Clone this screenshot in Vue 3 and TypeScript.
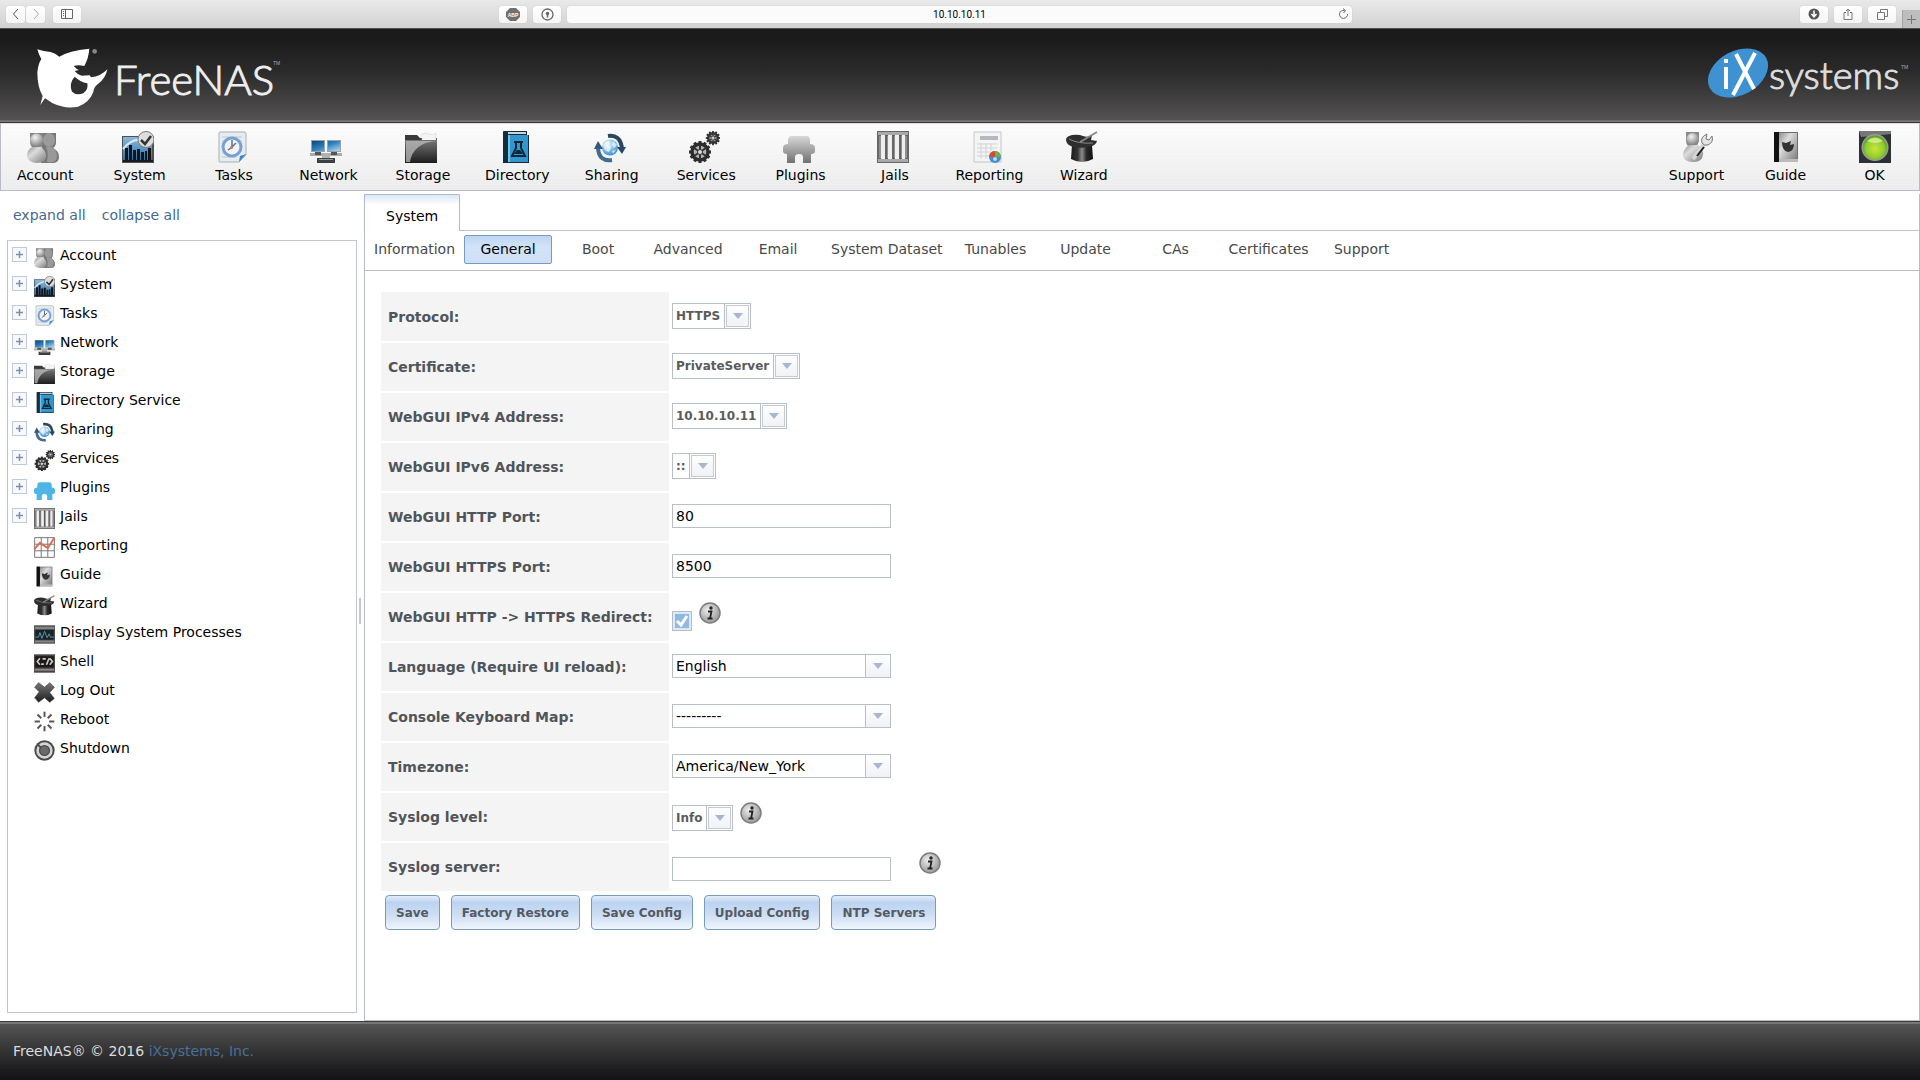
<script setup lang="ts">
import { ref } from 'vue'

interface NavItem {
  label: string
  icon: string
}
interface TreeItem extends NavItem {
  children: boolean
}
interface Field {
  id: string
  label: string
  kind: 'compact' | 'select' | 'text' | 'check'
  value?: string
  hint?: boolean
}

const mainNav: NavItem[] = [
  { label: 'Account', icon: 'account' },
  { label: 'System', icon: 'system' },
  { label: 'Tasks', icon: 'tasks' },
  { label: 'Network', icon: 'network' },
  { label: 'Storage', icon: 'storage' },
  { label: 'Directory', icon: 'directory' },
  { label: 'Sharing', icon: 'sharing' },
  { label: 'Services', icon: 'services' },
  { label: 'Plugins', icon: 'plugins' },
  { label: 'Jails', icon: 'jails' },
  { label: 'Reporting', icon: 'report' },
  { label: 'Wizard', icon: 'wizard' },
]

const sideNav: NavItem[] = [
  { label: 'Support', icon: 'support' },
  { label: 'Guide', icon: 'guide' },
  { label: 'OK', icon: 'alert' },
]

const tree: TreeItem[] = [
  { label: 'Account', icon: 'account', children: true },
  { label: 'System', icon: 'system', children: true },
  { label: 'Tasks', icon: 'tasks', children: true },
  { label: 'Network', icon: 'network', children: true },
  { label: 'Storage', icon: 'storage', children: true },
  { label: 'Directory Service', icon: 'directory', children: true },
  { label: 'Sharing', icon: 'sharing', children: true },
  { label: 'Services', icon: 'services', children: true },
  { label: 'Plugins', icon: 'plugins-blue', children: true },
  { label: 'Jails', icon: 'jails', children: true },
  { label: 'Reporting', icon: 'chart', children: false },
  { label: 'Guide', icon: 'guide', children: false },
  { label: 'Wizard', icon: 'wizard', children: false },
  { label: 'Display System Processes', icon: 'processes', children: false },
  { label: 'Shell', icon: 'shell', children: false },
  { label: 'Log Out', icon: 'logout', children: false },
  { label: 'Reboot', icon: 'reboot', children: false },
  { label: 'Shutdown', icon: 'shutdown', children: false },
]

const tabs = [
  'Information', 'General', 'Boot', 'Advanced', 'Email', 'System Dataset',
  'Tunables', 'Update', 'CAs', 'Certificates', 'Support',
]
const activeTab = ref('General')

const fields = ref<Field[]>([
  { id: 'protocol', label: 'Protocol:', kind: 'compact', value: 'HTTPS' },
  { id: 'certificate', label: 'Certificate:', kind: 'compact', value: 'PrivateServer' },
  { id: 'ipv4', label: 'WebGUI IPv4 Address:', kind: 'compact', value: '10.10.10.11' },
  { id: 'ipv6', label: 'WebGUI IPv6 Address:', kind: 'compact', value: '::' },
  { id: 'http-port', label: 'WebGUI HTTP Port:', kind: 'text', value: '80' },
  { id: 'https-port', label: 'WebGUI HTTPS Port:', kind: 'text', value: '8500' },
  { id: 'redirect', label: 'WebGUI HTTP -> HTTPS Redirect:', kind: 'check', hint: true },
  { id: 'language', label: 'Language (Require UI reload):', kind: 'select', value: 'English' },
  { id: 'keymap', label: 'Console Keyboard Map:', kind: 'select', value: '---------' },
  { id: 'timezone', label: 'Timezone:', kind: 'select', value: 'America/New_York' },
  { id: 'syslog-level', label: 'Syslog level:', kind: 'compact', value: 'Info', hint: true },
  { id: 'syslog-server', label: 'Syslog server:', kind: 'text', value: '', hint: true },
])

const actions = ['Save', 'Factory Restore', 'Save Config', 'Upload Config', 'NTP Servers']
const gearTeeth = [0, 30, 60, 90, 120, 150, 180, 210, 240, 270, 300, 330]
const spokes = [0, 45, 90, 135, 180, 225, 270, 315]
</script>

<template>
  <svg class="sprite" aria-hidden="true">
    <defs>
      <linearGradient id="g-silver" x1="0" y1="0" x2="1" y2="1">
        <stop offset="0" stop-color="#8e8e8e" /><stop offset=".35" stop-color="#dcdcdc" /><stop offset="1" stop-color="#7a7a7a" />
      </linearGradient>
      <linearGradient id="g-dark" x1="0" y1="0" x2="0" y2="1">
        <stop offset="0" stop-color="#777" /><stop offset="1" stop-color="#1c1c1c" />
      </linearGradient>
      <linearGradient id="g-metal" x1="0" y1="0" x2="1" y2="0">
        <stop offset="0" stop-color="#1c1c1c" /><stop offset=".3" stop-color="#333" /><stop offset=".5" stop-color="#8c8c8c" /><stop offset=".7" stop-color="#2a2a2a" /><stop offset="1" stop-color="#111" />
      </linearGradient>
      <linearGradient id="g-blue" x1="0" y1="0" x2="0" y2="1">
        <stop offset="0" stop-color="#8ab8dc" /><stop offset="1" stop-color="#2c74ad" />
      </linearGradient>
      <linearGradient id="g-screen" x1="0" y1="0" x2="1" y2="1">
        <stop offset="0" stop-color="#0d4679" /><stop offset=".5" stop-color="#2f83c0" /><stop offset="1" stop-color="#b4dbf2" />
      </linearGradient>
      <linearGradient id="g-plug" x1="0" y1="0" x2="0" y2="1">
        <stop offset="0" stop-color="#d8d8d8" /><stop offset="1" stop-color="#707070" />
      </linearGradient>
      <radialGradient id="g-head" cx=".4" cy=".3" r=".7">
        <stop offset="0" stop-color="#f4f4f4" /><stop offset="1" stop-color="#858585" />
      </radialGradient>
      <radialGradient id="g-green" cx=".5" cy=".55" r=".55">
        <stop offset="0" stop-color="#c8e63c" /><stop offset=".7" stop-color="#8fcc2e" /><stop offset="1" stop-color="#4f9a22" />
      </radialGradient>
      <radialGradient id="g-globe" cx=".4" cy=".3" r=".7">
        <stop offset="0" stop-color="#e6f5ff" /><stop offset="1" stop-color="#3c8fd0" />
      </radialGradient>
      <radialGradient id="g-info" cx=".4" cy=".35" r=".65">
        <stop offset="0" stop-color="#ededed" /><stop offset="1" stop-color="#9a9a9a" />
      </radialGradient>
    </defs>

    <symbol id="i-account" viewBox="0 0 32 32">
      <path d="M15 2h14v9q0 4-3 6 6 3 6 9 0 5-5 6H14z" fill="#777" />
      <ellipse cx="22" cy="9" rx="6" ry="7" fill="#9a9a9a" />
      <path d="M3 2h13v9q0 3-2 5h-9q-2-2-2-5z" fill="#858585" />
      <circle cx="9.500" cy="9" r="6.500" fill="url(#g-head)" />
      <path d="M5 16h9q5 4 5 9 0 7-9 7T0 25q0-6 5-9z" fill="url(#g-silver)" />
      <path d="M19 16q3 6 1 15 10 2 10-6 0-6-5-9z" fill="#999" />
    </symbol>
    <symbol id="i-system" viewBox="0 0 32 32">
      <path d="M0 5h32v27H0z" fill="#4c5155" />
      <path d="M1 6h29v23H1z" fill="url(#g-blue)" />
      <path d="M1 18Q14 2 29 14" fill="none" stroke="#d5e8f5" stroke-width="2" />
      <path d="M3 31V17h3v14M7 31V14h3v17M11 31V19h3v12M15 31V18h3v13M19 31V21h3v10M23 31V20h2v11M26 31V17h3v14z" fill="#101318" />
      <path d="M1 29h30v2H1z" fill="#181b1e" />
      <circle cx="24" cy="8.500" r="8" fill="#dedede" stroke="#777" />
      <path d="M19 9l4 4 6-8" fill="none" stroke="#333" stroke-width="2.500" />
    </symbol>
    <symbol id="i-tasks" viewBox="0 0 32 32">
      <path d="M3 2q0-1 1-1h24q2 0 2 2v21l-7 7H4q-1 0-1-1z" fill="#e6ecef" stroke="#a4b0b5" />
      <path d="M6 6h20M6 10h20M6 14h20M6 18h20M6 22h18M6 26h14" stroke="#b7c8c8" />
      <circle cx="16" cy="16" r="9" fill="#eef4fb" stroke="#7c9fd0" stroke-width="3" />
      <path d="M16 9v7l-4 3M16 16l4-4" fill="none" stroke="#5b7390" stroke-width="1.500" />
      <circle cx="15.500" cy="16.500" r="1.500" fill="#c77a55" />
      <path d="M23 31l1-6 6-2z" fill="#3587c8" />
    </symbol>
    <symbol id="i-network" viewBox="0 0 32 32">
      <path d="M0 22h32v3H0z" fill="#aaa" />
      <path d="M12 22h8v6h-8z" fill="#aeb3b6" />
      <path d="M1 9h14v12H1zM17 9h14v12H17z" fill="#9aa3a8" />
      <path d="M2 10h12v10H2zM18 10h12v10H18z" fill="url(#g-screen)" />
      <path d="M5 21h6v3H5zM21 21h6v3h-6z" fill="#555" />
      <path d="M7 27h18v5H7z" fill="#3c3f41" /><path d="M9 28h14v1H9z" fill="#999" />
    </symbol>
    <symbol id="i-storage" viewBox="0 0 32 32">
      <path d="M0 4h12l3 3h17v5H0z" fill="#3a3a3a" />
      <path d="M17 3q4-2 7 0t7-1v10H17z" fill="#f4f4f4" stroke="#ccc" stroke-width=".5" />
      <path d="M0 9h32v23H0z" fill="url(#g-dark)" />
      <path d="M1 10h30Q8 12 5 31H1z" fill="#bcbcbc" opacity=".75" />
    </symbol>
    <symbol id="i-directory" viewBox="0 0 32 32">
      <path d="M4 1q0-1 1-1h23v4h2v28H4z" fill="#172b3c" />
      <path d="M9 1h18v2H9z" fill="#c9d3d8" />
      <path d="M9 4h20v27H9z" fill="#3297cf" /><path d="M9 4h2v27H9z" fill="#6cc5ee" />
      <path d="M15 11h9M17 11v6l-4 8h13l-4-8v-6" fill="none" stroke="#0f2637" stroke-width="2" />
      <path d="M15 23h9l-3-4h-3z" fill="#0f2637" />
    </symbol>
    <symbol id="i-sharing" viewBox="0 0 32 32">
      <circle cx="16" cy="16.500" r="8" fill="url(#g-globe)" />
      <path d="M9 14q3-5 7-4l-2 4 3 2-2 5q-5-1-6-7M19 10l4 4-3 3-2-3zM18 20l4-1-3 4z" fill="#fff" opacity=".65" />
      <path d="M14 5q12-2 14 12" fill="none" stroke="#29485f" stroke-width="4" />
      <path d="M23 16h9l-4 7z" fill="#29485f" />
      <path d="M18 29Q5 31 4 17" fill="none" stroke="#3f6d90" stroke-width="4" />
      <path d="M0 18h9L4 10z" fill="#35597a" />
    </symbol>
    <symbol id="i-services" viewBox="0 0 32 32">
      <g transform="translate(12 21)">
        <rect v-for="a in gearTeeth" :key="a" x="-1.500" y="-11" width="3" height="4" fill="#2d2d2d" :transform="`rotate(${a})`" />
        <circle r="8" fill="#b4b4b4" stroke="#2d2d2d" stroke-width="3.500" />
        <path d="M0-7V7M-6-4L6 4M-6 4L6-4" stroke="#333" stroke-width="2" /><circle r="2.500" fill="#ddd" stroke="#333" />
      </g>
      <g transform="translate(25 7) scale(.6)">
        <rect v-for="a in gearTeeth" :key="a" x="-1.500" y="-12" width="3" height="5" fill="#2d2d2d" :transform="`rotate(${a})`" />
        <circle r="8" fill="#999" stroke="#333" stroke-width="4" />
        <path d="M0-7V7M-6-4L6 4M-6 4L6-4" stroke="#333" stroke-width="2" /><circle r="2.500" fill="#ccc" />
      </g>
    </symbol>
    <symbol id="i-plugins" viewBox="0 0 32 32">
      <path d="M5 13V9q0-4 4-4h14q4 0 4 4v4q5 0 5 4v3q0 3-4 3v9h-8v-6q0-3-4-3t-4 3v6H4v-9q-4 0-4-3v-3q0-4 5-4z" fill="url(#g-plug)" />
    </symbol>
    <symbol id="i-plugins-blue" viewBox="0 0 32 32">
      <path d="M5 13V9q0-4 4-4h14q4 0 4 4v4q5 0 5 4v3q0 3-4 3v9h-8v-6q0-3-4-3t-4 3v6H4v-9q-4 0-4-3v-3q0-4 5-4z" fill="#4fb5e6" />
    </symbol>
    <symbol id="i-jails" viewBox="0 0 32 32">
      <path d="M0 0h32v32H0z" fill="#666" />
      <path d="M1 1h30v3H1zM1 28h30v3H1z" fill="#a9a9a9" />
      <path d="M2 5h28v22H2z" fill="#909090" />
      <path d="M4 4h4v24H4zM11 4h4v24h-4zM18 4h4v24h-4zM25 4h3v24h-3z" fill="#eee" />
      <path d="M9 4v24M16 4v24M23 4v24" stroke="#555" stroke-width="1.500" />
    </symbol>
    <symbol id="i-report" viewBox="0 0 32 32">
      <path d="M3 1h27v30H3z" fill="#f4f4f4" stroke="#c6c6c6" />
      <path d="M9 5h18v4H9z" fill="#b5b8bc" />
      <path d="M6 13h20M6 17h20M6 21h14M6 25h12M10 12v16M15 12v16M20 12v8" stroke="#d3d3d3" />
      <circle cx="24" cy="26" r="6" fill="#3b8fe0" />
      <path d="M24 26v-6a6 6 0 0 0-6 6z" fill="#d84a32" /><path d="M24 26v-6a6 6 0 0 1 6 6z" fill="#6eb33c" />
      <circle cx="24" cy="28" r="2" fill="#bcdcf8" />
    </symbol>
    <symbol id="i-wizard" viewBox="0 0 32 32">
      <path d="M6 14h20l1 14q-11 6-22 0z" fill="url(#g-metal)" />
      <path d="M0 8q1-3 6-4 7-1 11 1 5 2 9-1l-1 5 6 1q-1 5-9 6-13 2-19-2Q0 12 0 8z" fill="#2e2e2e" />
      <path d="M3 8q9 5 24 4" fill="none" stroke="#8a8a8a" /><path d="M14 11L31 1" stroke="#8a8a8a" stroke-width="2" />
    </symbol>
    <symbol id="i-support" viewBox="0 0 32 32">
      <path d="M5 1h13v9l-2 5H7q-2-2-2-5z" fill="#8a8a8a" />
      <circle cx="11.500" cy="8" r="6" fill="url(#g-head)" />
      <path d="M8 14h9q6 5 5 10-1 7-9 7-10 0-11-6 0-7 6-11z" fill="url(#g-silver)" />
      <path d="M12 28L24 12" stroke="#d5d5d5" stroke-width="4" /><path d="M16 25l7-9" stroke="#222" stroke-width="2" />
      <path d="M21 12q-2-6 5-9l-1 5 3 1 3-4q2 6-4 9-4 1-6-2z" fill="#e4e4e4" stroke="#777" />
    </symbol>
    <symbol id="i-guide" viewBox="0 0 32 32">
      <path d="M4 1h24v30H4z" fill="#6f6f6f" /><path d="M9 2h18v28H9z" fill="url(#g-silver)" />
      <path d="M4 1h5v30H4z" fill="#111" /><path d="M9 28h19v3H9z" fill="#bbb" />
      <path d="M12 11l4 1 5-2-1 4 4-1q0 7-6 8-6-1-6-10z" fill="#333" />
    </symbol>
    <symbol id="i-alert" viewBox="0 0 32 32">
      <path d="M0 0h32v32H0z" fill="#2e3134" /><path d="M0 0h32v3L2 6z" fill="#777" />
      <circle cx="16" cy="16.500" r="13.500" fill="#9c9c9c" />
      <circle cx="16" cy="16.500" r="12" fill="url(#g-green)" />
      <path d="M8 10q8-7 16 0-8 4-16 0z" fill="#e7f4a8" opacity=".7" />
    </symbol>
    <symbol id="i-chart" viewBox="0 0 32 32">
      <path d="M1 1h30v30H1zM1 11h30M1 21h30M11 1v30M21 1v30" fill="#fff" stroke="#777" stroke-width="1.500" />
      <path d="M0 19L9 9l12 8L31 1" fill="none" stroke="#dc6b58" stroke-width="3" />
    </symbol>
    <symbol id="i-processes" viewBox="0 0 32 32">
      <path d="M0 2h32v28H0z" fill="#4d4d4d" /><path d="M1 4h30v4H1zM1 25h30v3H1z" fill="#858585" />
      <path d="M2 9h28v15H2z" fill="#17232a" />
      <path d="M2 20h5l2-7 3 9 4-11 4 10 3-6 2 5h5" fill="none" stroke="#5c92a3" stroke-width="1.500" />
    </symbol>
    <symbol id="i-shell" viewBox="0 0 32 32">
      <path d="M0 2h32v28H0z" fill="#4a4444" /><path d="M1 24h30v3H1z" fill="#8c8585" />
      <path d="M2 5h28v17H2z" fill="#1c1818" />
      <path d="M9 8l-4 5 4 5M13 9h5M11 17h4M19 18l4-10M24 8l4 5-4 5" fill="none" stroke="#ccc" stroke-width="2.500" />
    </symbol>
    <symbol id="i-logout" viewBox="0 0 32 32">
      <path d="M7 1l9 7 8-7 7 7-7 8 7 9-7 6-8-7-9 7-6-7 7-9-7-7z" fill="url(#g-dark)" stroke="#444" stroke-linejoin="round" />
    </symbol>
    <symbol id="i-reboot" viewBox="0 0 32 32">
      <path v-for="a in spokes" :key="a" d="M16 1v8" stroke="#555" stroke-width="3" :transform="`rotate(${a} 16 16)`" />
    </symbol>
    <symbol id="i-shutdown" viewBox="0 0 32 32">
      <circle cx="16" cy="16" r="15.500" fill="#4b4b4b" />
      <circle cx="16" cy="16" r="10.500" fill="none" stroke="#d5d5d5" stroke-width="4" />
      <path d="M6 7l7 7" stroke="#4b4b4b" stroke-width="3" /><circle cx="16" cy="16" r="6.500" fill="#6a6a6a" />
    </symbol>
    <symbol id="i-info" viewBox="0 0 22 22">
      <circle cx="11" cy="11" r="10" fill="url(#g-info)" stroke="#7d7d7d" stroke-width="1.500" />
      <circle cx="12" cy="6" r="1.700" fill="#222" />
      <path d="M9 9.500h3.500l-1.500 7h2.500M8.500 16.500h3" fill="none" stroke="#222" stroke-width="1.800" />
    </symbol>
  </svg>

  <div class="page">
    <div class="browser">
      <div class="browser-left">
        <div class="pair">
          <button class="chip narrow" aria-label="Back"><svg width="8" height="12" viewBox="0 0 8 12"><path d="M6 1L1.500 6 6 11" fill="none" stroke="#555" /></svg></button>
          <button class="chip narrow" aria-label="Forward"><svg width="8" height="12" viewBox="0 0 8 12"><path d="M2 1l4.500 5L2 11" fill="none" stroke="#aaa" /></svg></button>
        </div>
        <button class="chip" aria-label="Sidebar"><svg width="12" height="10" viewBox="0 0 12 10"><path d="M.5.500h11v9H.5zM4.500.500v9M2 2.500h1M2 4.500h1M2 6.500h1" fill="none" stroke="#666" /></svg></button>
      </div>
      <div class="browser-mid">
        <button class="chip" aria-label="Ad blocker"><svg width="14" height="13" viewBox="0 0 14 13"><path d="M4 0h6l4 4v5l-4 4H4L0 9V4z" fill="#707070" /><text x="7" y="9" text-anchor="middle" class="abp">ABP</text></svg></button>
        <button class="chip" aria-label="Password manager"><svg width="13" height="13" viewBox="0 0 13 13"><circle cx="6.500" cy="6.500" r="5.500" fill="none" stroke="#666" stroke-width="1.300" /><circle cx="6.500" cy="5.500" r="1.700" fill="#666" /><path d="M6.500 5v4.500" stroke="#666" stroke-width="1.500" /></svg></button>
        <div class="address">
          <input type="text" aria-label="Address" value="10.10.10.11" />
          <button class="reload" aria-label="Reload"><svg width="11" height="12" viewBox="0 0 11 12"><path d="M6.500 2.500A4 4 0 1 0 9.500 6M5 .5l2.500 2L5.500 5" fill="none" stroke="#666" /></svg></button>
        </div>
      </div>
      <div class="browser-right">
        <button class="chip" aria-label="Downloads"><svg width="12" height="12" viewBox="0 0 12 12"><circle cx="6" cy="6" r="5.500" fill="#555" /><path d="M6 2.500v6M3.500 6L6 8.800 8.500 6" fill="none" stroke="#fff" stroke-width="1.500" /></svg></button>
        <button class="chip" aria-label="Share"><svg width="10" height="12" viewBox="0 0 10 12"><path d="M3 4.500H1v7h8v-7H7M5 8V1M3 3l2-2 2 2" fill="none" stroke="#777" /></svg></button>
        <button class="chip" aria-label="Tabs"><svg width="11" height="11" viewBox="0 0 11 11"><path d="M.5 3.500h7v7h-7zM3.500 3V.500h7v7H8" fill="none" stroke="#777" /></svg></button>
        <button class="new-tab" aria-label="New tab"><svg width="9" height="9" viewBox="0 0 9 9"><path d="M4.500 0v9M0 4.500h9" stroke="#777" /></svg></button>
      </div>
    </div>

    <header class="banner">
      <svg width="260" height="68" viewBox="0 0 260 68" role="img" aria-label="FreeNAS">
        <g transform="scale(.3333)">
          <path d="M22 16Q40 23 62 24q14 4 26 14 28-18 90-24-2 28-15 52-18-4-32 0 8 9 16 12l-13 3q8 11 21 14l24-1 4 6q30-3 49-24-4 26-28 44-12 8-14 24-12 32-46 44-38 8-76-10l-23-15-14 20 7-27Q22 130 22 85q2-24 12-40-8-12-12-29z" fill="#fff" />
          <path d="M134 98q16 15 38 20 4 18-12 30-20 8-34-5-10-26 8-45z" fill="#302f30" />
          <circle cx="194" cy="22" r="7" fill="#888" />
        </g>
        <text x="84" y="51" class="mark">FreeNAS</text>
        <text x="243" y="21" class="tm">TM</text>
      </svg>
      <svg width="208" height="68" viewBox="0 0 208 68" role="img" aria-label="iXsystems">
        <ellipse cx="36" cy="29" rx="32" ry="22" transform="rotate(-28 36 29)" fill="#3f92d2" />
        <path d="M24 23v22M24 15v4" stroke="#fff" stroke-width="4" />
        <path d="M34 10l18 35M53 9L31 51" stroke="#fff" stroke-width="4" />
        <text x="67" y="45" class="mark sys">systems</text>
        <text x="199" y="25" class="tm">TM</text>
      </svg>
    </header>

    <nav class="toolbar" aria-label="Main">
      <div class="toolbar-main">
        <button v-for="item in mainNav" :key="item.label" class="tool">
          <svg width="32" height="32"><use :href="`#i-${item.icon}`" /></svg>
          <span>{{ item.label }}</span>
        </button>
      </div>
      <div class="toolbar-side">
        <button v-for="item in sideNav" :key="item.label" class="tool">
          <svg width="32" height="32"><use :href="`#i-${item.icon}`" /></svg>
          <span>{{ item.label }}</span>
        </button>
      </div>
    </nav>

    <main class="body">
      <aside class="sidebar">
        <div class="tree-links">
          <a href="#">expand all</a>
          <a href="#">collapse all</a>
        </div>
        <ul class="tree">
          <li v-for="item in tree" :key="item.label">
            <button v-if="item.children" class="expander" :aria-label="`Expand ${item.label}`">
              <svg width="7" height="7" viewBox="0 0 7 7"><path d="M3.500 0v7M0 3.500h7" stroke="#7f8fae" stroke-width="1.500" /></svg>
            </button>
            <span v-else class="expander-gap"></span>
            <svg class="tree-icon" width="21" height="21"><use :href="`#i-${item.icon}`" /></svg>
            <span>{{ item.label }}</span>
          </li>
        </ul>
      </aside>
      <div class="splitter"><span></span></div>

      <section class="content">
        <div class="tab-strip"><button class="page-tab">System</button></div>
        <div class="sub-tabs">
          <button v-for="tab in tabs" :key="tab" :class="{ active: tab === activeTab }" @click="activeTab = tab">{{ tab }}</button>
        </div>

        <form @submit.prevent>
          <table>
            <tbody>
              <tr v-for="field in fields" :key="field.id">
                <th scope="row"><label :for="field.id">{{ field.label }}</label></th>
                <td>
                  <div class="control" :class="{ hinted: field.hint }">
                    <span v-if="field.kind === 'compact' || field.kind === 'select'" class="dropdown" :class="field.kind">
                      <select :id="field.id"><option>{{ field.value }}</option></select>
                      <span class="arrow"><svg width="10" height="6" viewBox="0 0 10 6"><path d="M0 0h10L5 6z" fill="#a9b6d3" /></svg></span>
                    </span>
                    <input v-else-if="field.kind === 'text'" :id="field.id" type="text" v-model="field.value" />
                    <span v-else class="check">
                      <input :id="field.id" type="checkbox" checked />
                      <svg width="14" height="12" viewBox="0 0 14 12"><path d="M2 6l4 4 6-9" fill="none" stroke="#fff" stroke-width="3" /></svg>
                    </span>
                    <svg v-if="field.hint" class="info" :class="{ far: field.kind === 'text' }" width="22" height="22"><use href="#i-info" /></svg>
                  </div>
                </td>
              </tr>
            </tbody>
          </table>
          <div class="actions">
            <button v-for="action in actions" :key="action" type="button">{{ action }}</button>
          </div>
        </form>
      </section>
    </main>

    <footer class="footer">FreeNAS® © 2016 <a href="#">iXsystems, Inc.</a></footer>
  </div>
</template>

<style>
body {
  margin: 0;
  background: #fff;
}
</style>

<style scoped>
.page,
.page button,
.page input,
.page select {
  font-family: Verdana, "DejaVu Sans", sans-serif;
  font-size: 14px;
}
.page {
  display: flex;
  flex-direction: column;
  min-height: 100vh;
  color: #000;
}
.page *,
.page {
  box-sizing: border-box;
}
button {
  margin: 0;
  padding: 0;
  border: 0;
  background: none;
  color: inherit;
}
svg {
  display: block;
  flex: none;
}
a {
  text-decoration: none;
}
.sprite {
  position: absolute;
  width: 0;
  height: 0;
}

/* browser bar */
.browser {
  display: grid;
  grid-template-columns: 499fr 853fr 568fr;
  height: 28px;
  background: linear-gradient(#e9e9e9, #d2d2d2);
}
.browser-left,
.browser-mid,
.browser-right {
  display: flex;
  align-items: center;
  gap: 6px;
}
.browser-left {
  padding-left: 6px;
  gap: 8px;
}
.pair {
  display: flex;
  gap: 1px;
}
.chip {
  display: flex;
  align-items: center;
  justify-content: center;
  width: 28px;
  height: 17px;
  border-radius: 3px;
  background: linear-gradient(#fff, #f5f5f5);
  box-shadow: 0 0 1px #aaa;
}
.chip.narrow {
  width: 19px;
}
.abp {
  font: bold 5px "Liberation Sans", sans-serif;
  fill: #fff;
}
.address {
  position: relative;
  flex: 1;
}
.page .address input {
  display: block;
  width: 100%;
  height: 17px;
  padding: 0 20px;
  border: 0;
  border-radius: 3px;
  background: #fbfbfb;
  box-shadow: 0 0 1px #aaa;
  font: 10px Roboto, sans-serif;
  text-align: center;
}
.reload {
  position: absolute;
  top: 2px;
  right: 3px;
}
.browser-right {
  justify-content: flex-end;
}
.new-tab {
  display: flex;
  align-items: center;
  justify-content: center;
  align-self: flex-end;
  width: 18px;
  height: 18px;
  background: #bdbdbd;
  border-left: 1px solid #a5a5a5;
}

/* banner */
.banner {
  display: flex;
  justify-content: space-between;
  height: 95px;
  padding: 15px 10px 0 30px;
  border-top: 1px solid #4d504e;
  border-bottom: 1px solid #3c3c3c;
  background: linear-gradient(#6f6f6f, #777) bottom / 100% 2px no-repeat, linear-gradient(#1b1b1b 10%, #2a2a2a 45%, #555354);
}
.mark {
  font: 300 42px Lato, "Open Sans", sans-serif;
  fill: #eee;
  stroke: #eee;
  stroke-width: 1px;
}
.mark.sys {
  font-size: 38px;
  fill: #ddd;
  stroke: #ddd;
}
.tm {
  font: 5px "Liberation Sans", sans-serif;
  fill: #aaa;
}

/* toolbar */
.toolbar {
  display: flex;
  justify-content: space-between;
  height: 68px;
  border: 1px solid #b8bac6;
  border-top-color: #ddd;
  background: linear-gradient(#fcfcfc, #ececec);
}
.toolbar-main {
  display: flex;
  flex: 0 0 1133px;
  margin-left: -3px;
}
.toolbar-main .tool {
  flex: 1;
}
.toolbar-side {
  display: flex;
}
.toolbar-side .tool {
  width: 89px;
}
.tool {
  display: flex;
  flex-direction: column;
  align-items: center;
  padding-top: 7px;
}
.tool svg {
  margin-right: 4px;
}
.toolbar-side .tool svg {
  margin-right: 0;
}
.tool span {
  margin-top: 4px;
  line-height: 17px;
}

/* body */
.body {
  display: flex;
  flex: 1;
}
.sidebar {
  display: flex;
  flex-direction: column;
  width: 357px;
  padding: 14px 0 8px 7px;
}
.tree-links {
  display: flex;
  gap: 16px;
  padding: 0 6px;
  line-height: 20px;
}
.tree-links a {
  color: #45698f;
}
.tree {
  flex: 1;
  margin: 15px 0 0;
  padding: 0 4px;
  border: 1px solid #c3c6ce;
  list-style: none;
}
.tree li {
  display: flex;
  align-items: center;
  height: 29px;
  padding-bottom: 2px;
}
.tree li > span:last-child {
  margin-left: 5px;
}
.expander,
.expander-gap {
  width: 15px;
  height: 15px;
}
.expander {
  display: flex;
  align-items: center;
  justify-content: center;
  border: 1px solid #c0c8dc;
  background: #f7f9fd;
}
.tree-icon {
  margin: 5px 0 0 7px;
}
.splitter {
  display: flex;
  align-items: center;
  width: 7px;
  padding: 10px 0 0 2px;
}
.splitter span {
  width: 2px;
  height: 26px;
  background: #c5c8d2;
}
.content {
  flex: 1;
  margin-top: 3px;
  border: 1px solid #b9bcc8;
  border-top: 0;
}
.tab-strip {
  display: flex;
  height: 37px;
  border-bottom: 1px solid #c0c3cc;
}
.page-tab {
  height: 37px;
  margin-left: -1px;
  padding: 6px 21px 0;
  border: 1px solid #b0b8cc;
  border-bottom: 0;
  border-radius: 2px 2px 0 0;
  background: linear-gradient(#dbe7f8, #fff 10px);
}
.sub-tabs {
  display: flex;
  gap: 2px;
  height: 40px;
  padding: 4px 2px 5px;
  border-bottom: 1px solid #b9bcc8;
}
.sub-tabs button {
  min-width: 88px;
  height: 29px;
  padding: 0 6px 2px;
  border: 1px solid transparent;
  border-radius: 2px;
  color: #494949;
}
.sub-tabs button.active {
  border-color: #769dc0;
  background: linear-gradient(#bdd4f0, #d2e3f8 40%, #cfe0f6);
  color: #000;
}

/* form */
form {
  padding: 21px 16px;
}
table {
  border-collapse: collapse;
}
tr {
  height: 50px;
}
th,
td {
  padding: 0;
}
th {
  width: 288px;
  padding-left: 7px;
  border-bottom: 2px solid #fff;
  background: #f4f4f4;
  color: #50545b;
  text-align: left;
  white-space: nowrap;
}
td {
  padding: 0 0 2px 3px;
}
.control {
  display: flex;
  align-items: center;
}
.control.hinted {
  align-items: flex-end;
  height: 29px;
}
.dropdown {
  display: flex;
  position: relative;
  height: 24px;
  border: 1px solid #b9bfc9;
  background: #fff;
}
.dropdown select {
  height: 100%;
  padding: 0 27px 0 3px;
  border: 0;
  background: none;
  appearance: none;
}
.dropdown.select {
  width: 219px;
}
.dropdown.select select {
  width: 100%;
}
.dropdown.compact {
  height: 26px;
}
.page .dropdown.compact select {
  padding-right: 29px;
  color: #5b5b5b;
  font-size: 12px;
  font-weight: bold;
}
.arrow {
  position: absolute;
  top: 0;
  right: 0;
  bottom: 0;
  display: flex;
  align-items: center;
  justify-content: center;
  width: 25px;
  border-left: 1px solid #b9bfc9;
  background: linear-gradient(#fff, #eff1f5);
  pointer-events: none;
}
.compact .arrow {
  width: 26px;
  box-shadow: inset 0 0 0 1px #fff, inset 0 0 0 2px #c5c9d2;
}
input[type="text"] {
  width: 219px;
  height: 24px;
  padding: 0 3px;
  border: 1px solid #b9bfc9;
  background: #fff;
}
.check {
  position: relative;
  width: 20px;
  height: 20px;
}
.check input {
  display: block;
  width: 20px;
  height: 20px;
  margin: 0;
  border: 1px solid #b4bdca;
  background: #8fb9e0;
  box-shadow: inset 0 0 0 2px #dfe9f5;
  appearance: none;
}
.check svg {
  position: absolute;
  top: 4px;
  left: 3px;
  pointer-events: none;
}
.info {
  align-self: flex-start;
  margin-left: 7px;
}
.info.far {
  margin-left: 28px;
}
.actions {
  display: flex;
  gap: 11px;
  padding: 2px 4px;
}
.page .actions button {
  height: 35px;
  padding: 0 10px;
  border: 1px solid #769dc0;
  border-radius: 4px;
  background: linear-gradient(#e3edfa, #bcd3f0 20%, #cfdff4 60%, #eff5fd);
  color: #555a62;
  font-size: 12px;
  font-weight: bold;
}

/* footer */
.footer {
  height: 59px;
  padding-left: 13px;
  border-top: 1px solid #3c3c3c;
  background: linear-gradient(#777, #777) top / 100% 2px no-repeat, linear-gradient(#575757, #333 50%, #121217);
  color: #ddd;
  line-height: 58px;
}
.footer a {
  color: #4b6f96;
}
</style>
